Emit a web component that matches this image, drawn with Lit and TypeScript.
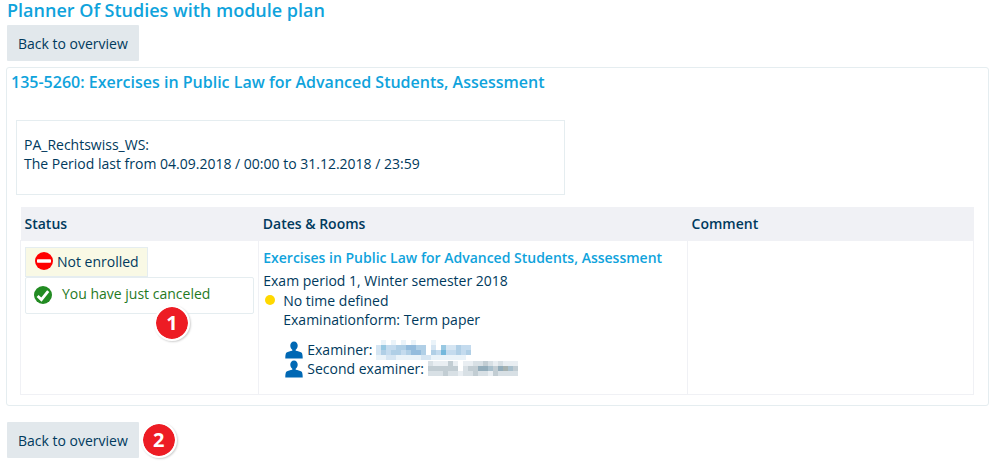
import { LitElement, html, css, svg } from "lit";
import { customElement, property } from "lit/decorators.js";

/* One letter per 5px cell of a redacted name; a dot leaves the cell empty. */
const BLUE: Record<string, string> = {
  a: "#eaf3f9", b: "#d5e5f2", c: "#c4dbee", d: "#b0cfe6", e: "#98c8e2", f: "#94bcdd", g: "#74b8dc",
};
const GREY: Record<string, string> = {
  a: "#e9eef2", b: "#d8e0e5", c: "#c2cdd3", d: "#bccfd9", e: "#a9c0cd", f: "#93adbb", g: "#a7b2b1",
};

@customElement("redacted-name")
class RedactedName extends LitElement {
  static styles = css`
    :host { display: inline-flex; }
    svg { display: block; shape-rendering: crispEdges; }
  `;
  @property() tone = "blue";
  @property({ attribute: false }) rows: string[] = [];

  render() {
    const colours = this.tone === "blue" ? BLUE : GREY;
    const w = this.rows[0].length * 5;
    const h = this.rows.length * 5;
    return html`<svg width=${w} height=${h} viewBox="0 0 ${w} ${h}" role="img" aria-label="Name hidden">
      ${this.rows.map((row, y) =>
        [...row].map((cell, x) =>
          cell === "." ? null : svg`<rect x=${x * 5} y=${y * 5} width="5" height="5" fill=${colours[cell]} />`))}
    </svg>`;
  }
}

@customElement("step-badge")
class StepBadge extends LitElement {
  static styles = css`
    :host {
      display: grid;
      place-items: center;
      box-sizing: border-box;
      width: 36px;
      height: 36px;
      border: 2px solid #fff;
      border-radius: 50%;
      background: #ed1c24;
      background-clip: padding-box;
      color: #fff;
      font: 700 20px/28px "Open Sans", "Noto Sans", sans-serif;
      box-shadow: 1px 1px 2px #d0d0d0;
    }
  `;
  render() {
    return html`<slot></slot>`;
  }
}

const person = html`<svg class="icon" width="18" height="18" viewBox="0 0 18 18" aria-hidden="true">
  <path fill="#0068b4" d="M9 0.6C6.8 0.6 5.3 2.3 5.3 4.6C5.3 6.6 6.2 8 7.3 8.8V9.8C5.4 10.1 2.9 10.7 1.6 11.6C0.6 12.4 0.3 14.6 0.3 17.4H17.7C17.7 14.6 17.4 12.4 16.4 11.6C15.1 10.7 12.6 10.1 10.7 9.8V8.8C11.8 8 12.7 6.6 12.7 4.6C12.7 2.3 11.2 0.6 9 0.6Z"/>
</svg>`;

@customElement("app-root")
class AppRoot extends LitElement {
  static styles = css`
    :host {
      display: block;
      padding: 0 5px 6px 6px;
      background: #fff;
      color: #003a5d;
      font: 14px/19px "Open Sans", "Noto Sans", sans-serif;
    }
    h1, h2, p { margin: 0; }
    h1, h2, .module { color: #0fa3dc; font-weight: 600; }
    h1 { font-size: 18px; line-height: 20px; padding: 0 1px 5px; }
    h2 { font-size: 16px; line-height: 20px; padding: 0 4px; }
    .actions { display: flex; align-items: center; gap: 2px; padding: 0 1px; }
    button {
      height: 36px;
      padding: 0 11px;
      border: 0;
      border-radius: 1px;
      background: #e2e8ec;
      color: inherit;
      font: inherit;
    }
    .panel {
      margin: 6px 0 16px;
      padding: 4px 0 10px;
      border: 1px solid #e5edf0;
      border-radius: 3px;
    }
    .period {
      box-sizing: border-box;
      width: 56%;
      margin: 28px 9px 12px;
      padding: 14px 7px 21px;
      border: 1px solid #e5edf0;
    }
    .grid { padding: 0 14px 0 13px; }
    table {
      width: 100%;
      table-layout: fixed;
      border-collapse: collapse;
      text-align: left;
    }
    .status { width: 25%; }
    .dates { width: 45%; }
    th { box-sizing: border-box; padding: 7px 4px; font-weight: 600; background: #f0f1f5; }
    td { padding: 6px 4px 15px; vertical-align: top; border: 1px solid #f0f1f5; }
    .state { display: flex; align-items: center; }
    .enrolment {
      width: fit-content;
      gap: 3px;
      padding: 4px 8px;
      border: 1px solid #e5edf0;
      background: #f9f9e5;
    }
    .result {
      position: relative;
      gap: 10px;
      padding: 7px 8px 9px;
      border: 1px solid #e5edf0;
      border-radius: 2px;
      color: #1f7a1f;
    }
    .state span { padding-bottom: 1px; line-height: 18px; }
    .result step-badge { position: absolute; left: 128px; top: 27px; }
    .icon { flex: none; display: block; }
    .module { display: block; padding: 1px 0 4px; text-decoration: none; }
    .slot { display: grid; grid-template-columns: 12px 1fr; column-gap: 8px; padding-top: 1px; }
    .dot { width: 10px; height: 10px; margin: 4px 2px; border-radius: 50%; background: #ffd800; }
    .people { padding: 11px 0 1px 22px; }
    .person { display: flex; align-items: center; gap: 4px; height: 19px; }
  `;

  render() {
    return html`
      <h1>Planner Of Studies with module plan</h1>
      <div class="actions"><button type="button">Back to overview</button></div>
      <section class="panel">
        <h2>135-5260: Exercises in Public Law for Advanced Students, Assessment</h2>
        <div class="period">
          <p>PA_Rechtswiss_WS:</p>
          <p>The Period last from 04.09.2018 / 00:00 to 31.12.2018 / 23:59</p>
        </div>
        <div class="grid">
          <table>
            <thead>
              <tr>
                <th class="status" scope="col">Status</th>
                <th class="dates" scope="col">Dates &amp; Rooms</th>
                <th scope="col">Comment</th>
              </tr>
            </thead>
            <tbody>
              <tr>
                <td>
                  <div class="state enrolment">
                    <svg class="icon" width="20" height="20" viewBox="0 0 20 20" aria-hidden="true">
                      <circle cx="10" cy="9" r="9" fill="#f00"/>
                      <rect x="3" y="7.2" width="14" height="3.6" rx="0.8" fill="#fff"/>
                    </svg>
                    <span>Not enrolled</span>
                  </div>
                  <div class="state result">
                    <svg class="icon" width="18" height="18" viewBox="0 0 18 18" aria-hidden="true">
                      <circle cx="9" cy="9" r="9" fill="#228b22"/>
                      <path d="M3.6 10L7.4 13.6L14.2 5.2" fill="none" stroke="#fff" stroke-width="2.8"/>
                    </svg>
                    <span>You have just canceled</span>
                    <step-badge>1</step-badge>
                  </div>
                </td>
                <td>
                  <a class="module" href="#module">Exercises in Public Law for Advanced Students, Assessment</a>
                  <p>Exam period 1, Winter semester 2018</p>
                  <div class="slot">
                    <span class="dot"></span>
                    <div>
                      <p>No time defined</p>
                      <p>Examinationform: Term paper</p>
                    </div>
                  </div>
                  <div class="people">
                    <div class="person">
                      ${person}<span>Examiner:</span>
                      <redacted-name tone="blue" .rows=${[
                        ".a.a.a.a...a.......",
                        "beccddffdd.b.ebbdcc",
                        "bdcddcdffd.dcgccdcd",
                        "aabbaaaaabbaaaaaaa.",
                      ]}></redacted-name>
                    </div>
                    <div class="person">
                      ${person}<span>Second examiner:</span>
                      <redacted-name tone="grey" .rows=${[
                        "baaaca.aabbcbabaaa",
                        "cccccc.bccffecfgec",
                        "bbbcbbabbcbbacbbbb",
                      ]}></redacted-name>
                    </div>
                  </div>
                </td>
                <td></td>
              </tr>
            </tbody>
          </table>
        </div>
      </section>
      <div class="actions">
        <button type="button">Back to overview</button>
        <step-badge>2</step-badge>
      </div>
    `;
  }
}
